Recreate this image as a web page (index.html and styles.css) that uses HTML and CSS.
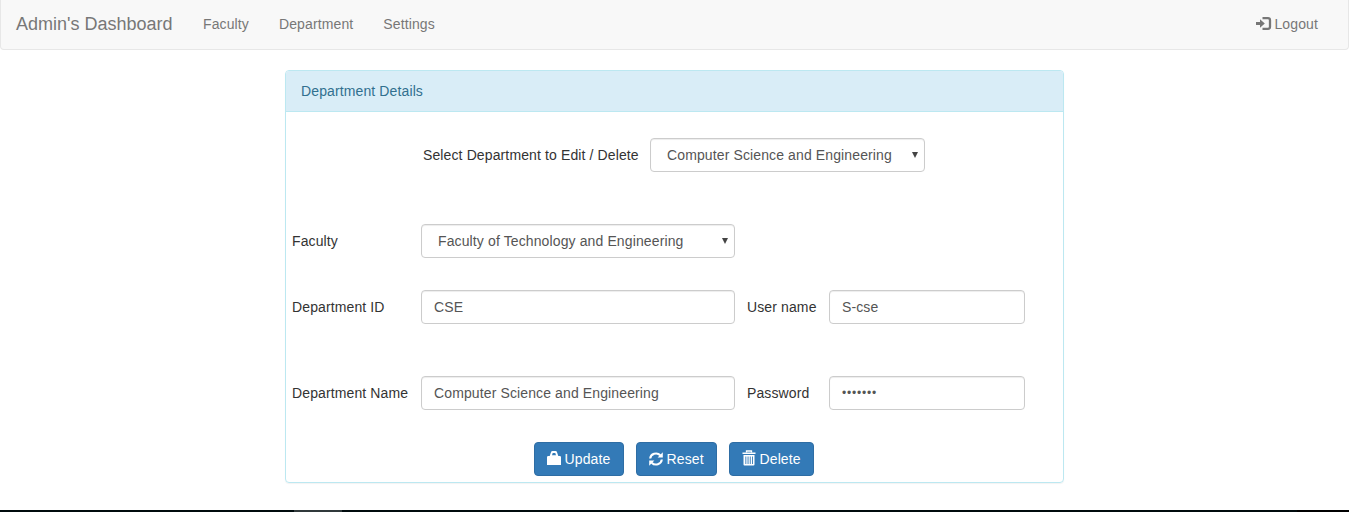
FILE: index.html
```html
<!DOCTYPE html>
<html lang="en">
<head>
<meta charset="utf-8">
<title>Admin's Dashboard</title>
<link rel="stylesheet" href="styles.css">
</head>
<body>
<nav class="navbar">
  <a class="brand">Admin's Dashboard</a>
  <a class="nav-link">Faculty</a>
  <a class="nav-link">Department</a>
  <a class="nav-link">Settings</a>
  <a class="nav-link logout"><svg class="icon logout-icon" width="16" height="14" viewBox="0 0 16 14"><path d="M0 5h4V2.300L8.800 6.500 4 10.700V8H0z" fill="currentColor"/><path d="M6.500 1.200H12Q14 1.200 14 3.200v6.600Q14 11.800 12 11.800H6.500" fill="none" stroke="currentColor" stroke-width="2.300"/></svg>Logout</a>
</nav>
<main class="panel">
  <div class="panel-heading">Department Details</div>
  <form class="panel-body">
    <div class="picker">
      <label>Select Department to Edit / Delete</label>
      <div class="select-wrap picker-select"><select class="control"><option>Computer Science and Engineering</option></select><svg class="arrow" width="6" height="6" viewBox="0 0 6 6"><path d="M0 0h6L3 6z"/></svg></div>
    </div>
    <div class="row faculty-row">
      <label>Faculty</label>
      <div class="select-wrap"><select class="control"><option>Faculty of Technology and Engineering</option></select><svg class="arrow" width="6" height="6" viewBox="0 0 6 6"><path d="M0 0h6L3 6z"/></svg></div>
    </div>
    <div class="row id-row">
      <label>Department ID</label><input class="control" type="text" value="CSE">
      <label>User name</label><input class="control" type="text" value="S-cse">
    </div>
    <div class="row name-row">
      <label>Department Name</label><input class="control" type="text" value="Computer Science and Engineering">
      <label>Password</label><input class="control password" type="password" value="1234567">
    </div>
    <div class="actions">
      <button type="button" class="btn update"><svg class="icon lock" width="14" height="14" viewBox="0 0 14 14"><path d="M0 14V6.200Q0 5 1.200 5H2.700L4 1.200Q4.300 0 5.500 0h3Q9.700 0 10 1.200L11.300 5h1.500Q14 5 14 6.200V14zM5 4.200h4L8.300 2H5.700z" fill="currentColor" fill-rule="evenodd"/></svg>Update</button>
      <button type="button" class="btn reset"><svg class="icon" width="14" height="14" viewBox="0 0 14 14"><path d="M1.200 6.500A5.800 5.400 0 0 1 11.300 3.300M12.800 7.500A5.800 5.400 0 0 1 2.700 10.700" fill="none" stroke="currentColor" stroke-width="2.100"/><path d="M13.800.3v5.200H8.600zM.2 13.700V8.500h5.200z" fill="currentColor"/></svg>Reset</button>
      <button type="button" class="btn delete"><svg class="icon trash" width="14" height="16" viewBox="0 0 14 16"><path d="M4.500 2.500V1h5v1.500" fill="none" stroke="currentColor" stroke-width="1.300"/><path d="M.5 2.500h13V4H.5zM1.500 5h11v9.500q0 1-1 1h-9q-1 0-1-1zM3.400 6.500V14h.9V6.500zM5.600 6.500V14h.9V6.500zM7.800 6.500V14h.9V6.500zM10 6.500V14h.9V6.500z" fill="currentColor" fill-rule="evenodd"/></svg>Delete</button>
    </div>
  </form>
</main>
<footer class="taskbar"><div class="taskbar-item"></div></footer>
</body>
</html>
```
FILE: styles.css
```css
* { box-sizing: border-box; }
body {
  margin: 0;
  height: 512px;
  overflow: hidden;
  display: flex;
  flex-direction: column;
  background: #fff;
  color: #333;
  font: 14px/20px "Liberation Sans", Arial, sans-serif;
  letter-spacing: .12px;
}
.navbar {
  height: 50px;
  flex: none;
  display: flex;
  padding: 14px 15px 0;
  background: #f8f8f8;
  border: 1px solid #e7e7e7;
  border-top: 0;
  border-radius: 0 0 4px 4px;
  color: #777;
}
.brand { font-size: 18px; letter-spacing: 0; margin-right: 15.5px; }
.nav-link { padding: 0 15px; }
.logout { margin-left: auto; display: flex; }
.logout-icon { margin: 3px 2px 0 0; }
.panel {
  width: 779px;
  height: 413px;
  flex: none;
  margin: 20px 0 0 285px;
  border: 1px solid #bce8f1;
  border-radius: 4px;
  box-shadow: 0 1px 1px rgba(0, 0, 0, .05);
}
.panel-heading {
  height: 41px;
  padding: 10px 15px;
  background: #d9edf7;
  border-bottom: 1px solid #bce8f1;
  border-radius: 3px 3px 0 0;
  color: #31708f;
}
.panel-body { padding: 26px 6px 0; }
.picker {
  display: grid;
  grid-template-columns: 215px 275px;
  align-items: center;
  column-gap: 12px;
  margin-left: 131px;
}
.row {
  display: grid;
  grid-template-columns: 117px 314px 70px 196px;
  column-gap: 12px;
  align-items: center;
}
.faculty-row { margin-top: 52px; }
.id-row { margin-top: 32px; }
.name-row { margin-top: 52px; }
label { white-space: nowrap; }
.control {
  display: block;
  width: 100%;
  height: 34px;
  margin: 0;
  padding: 6px 12px;
  border: 1px solid #ccc;
  border-radius: 4px;
  background: #fff;
  box-shadow: inset 0 1px 1px rgba(0, 0, 0, .075);
  color: #555;
  font: inherit;
  letter-spacing: inherit;
}
.password { font-size: 12px; letter-spacing: .8px; }
select.control { appearance: none; padding-left: 16px; }
.select-wrap { position: relative; }
.arrow { position: absolute; right: 7px; top: 14px; fill: #444; }
.actions {
  display: flex;
  justify-content: center;
  gap: 12px;
  margin-top: 32px;
  padding-right: 2px;
}
.btn {
  display: flex;
  align-items: center;
  gap: 4px;
  height: 34px;
  margin: 0;
  padding: 0 12px;
  border: 1px solid #2e6da4;
  border-radius: 4px;
  background: #337ab7;
  color: #fff;
  font: inherit;
  letter-spacing: inherit;
  white-space: nowrap;
}
.icon { display: block; flex: none; }
.update { width: 90px; }
.reset { width: 81px; }
.delete { width: 85px; }
.lock { margin-top: -2px; }
.trash { margin-top: -2px; }
.taskbar {
  height: 2px;
  margin-top: auto;
  padding-left: 294px;
  background: linear-gradient(90deg, #000b0d 0, #000b0d 1297px, #000 1297px);
}
.taskbar-item { width: 48px; height: 2px; background: #30393b; }
```
